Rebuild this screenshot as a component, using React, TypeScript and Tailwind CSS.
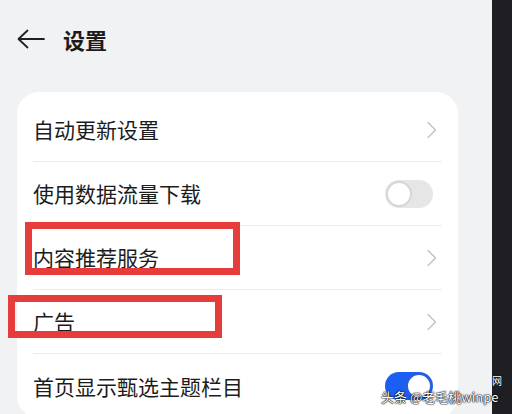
const font = { fontFamily: '"Noto Sans CJK SC", "Noto Sans", sans-serif' }

function Chevron() {
  return (
    <svg width="12" height="18" viewBox="0 0 12 18" className="mr-[4px]">
      <path d="M2 1.5 L9.5 9 L2 16.5" fill="none" stroke="#c6c6c6" strokeWidth="1.6" strokeLinecap="round" strokeLinejoin="round" />
    </svg>
  )
}

function Toggle({ on }: { on?: boolean }) {
  return (
    <div
      className={`relative mr-[9px] h-[28px] w-[48px] rounded-full ${on ? "bg-[#1b5ff2]" : "bg-[#e6e6e6]"}`}
    >
      <div
        className={`absolute top-[1px] h-[26px] w-[26px] rounded-full bg-white border-2 ${
          on ? "right-[1px] border-[#2a5fd8]" : "left-[1px] border-[#d6d6d6]"
        }`}
      />
    </div>
  )
}

const rows: { label: string; kind: "link" | "off" | "on" }[] = [
  { label: "自动更新设置", kind: "link" },
  { label: "使用数据流量下载", kind: "off" },
  { label: "内容推荐服务", kind: "link" },
  { label: "广告", kind: "link" },
  { label: "首页显示甄选主题栏目", kind: "on" },
]

export default function App() {
  return (
    <div className="relative flex h-[414px] w-[512px] overflow-hidden bg-[#f1f2f4]" style={font}>
      <div className="flex-1 pl-[17px] pr-[34px]">
        <div className="flex h-[78px] items-center">
          <svg width="28" height="20" viewBox="0 0 28 20" className="mt-[-1px]">
            <path d="M27 10 H1.5 M10.5 1.5 L1.5 10 L10.5 18.5" fill="none" stroke="#202020" strokeWidth="1.8" strokeLinecap="round" strokeLinejoin="round" />
          </svg>
          <span className="ml-[18px] text-[22px] font-semibold leading-none text-[#1c1c1c]">设置</span>
        </div>

        <div className="mt-[14px] rounded-[22px] bg-white px-4 pt-[6px]">
          {rows.map((r, i) => (
            <div
              key={r.label}
              className={`flex h-16 items-center justify-between ${i < rows.length - 1 ? "border-b border-[#ececec]" : ""}`}
            >
              <span className="text-[21px] leading-none text-[#1c1c1c]">{r.label}</span>
              {r.kind === "link" && <Chevron />}
              {r.kind === "off" && <Toggle />}
              {r.kind === "on" && <Toggle on />}
            </div>
          ))}
        </div>
      </div>
      <div className="w-[20px] bg-[#1f1e22]" />

      {/* red annotation boxes */}
      <div className="absolute left-[25px] top-[222px] h-[53px] w-[215px] border-[7px] border-[#e63c3c]" />
      <div className="absolute left-[8px] top-[295px] h-[43px] w-[214px] border-[7px] border-[#e63c3c]" />

      {/* watermark */}
      <div
        className="absolute left-[492px] top-[376px] text-[10px] leading-none text-white"
        style={{ textShadow: "0 0 1px #000, 0 0 1px #000" }}
      >
        网
      </div>
      <div
        className="absolute left-[381px] top-[390px] whitespace-nowrap text-[13px] leading-none text-white"
        style={{ textShadow: "0 0 1px #000, 0 0 1px #000, 0 0 2px #000" }}
      >
        头条 @老毛桃winpe
      </div>
    </div>
  )
}
